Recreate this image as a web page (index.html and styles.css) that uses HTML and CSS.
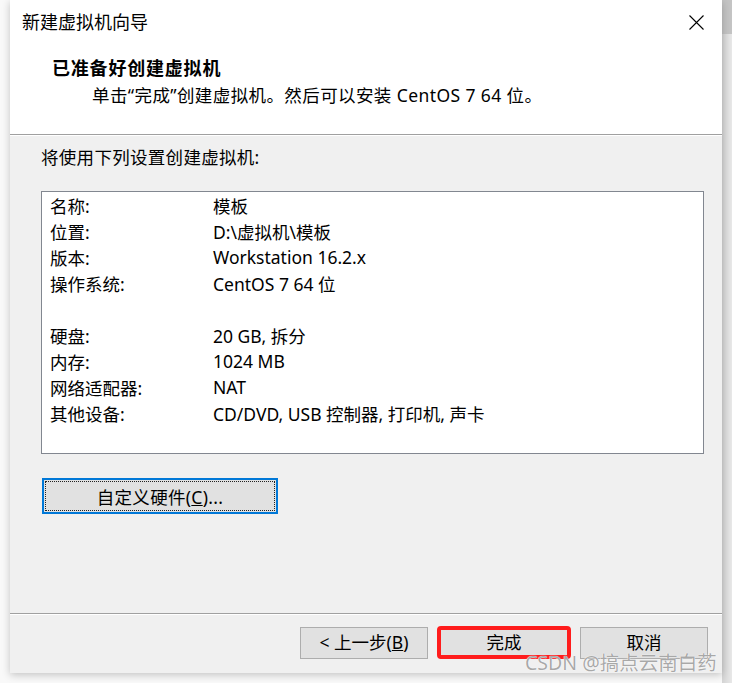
FILE: index.html
```html
<!DOCTYPE html>
<html lang="zh-CN">
<head>
<meta charset="utf-8">
<title>新建虚拟机向导</title>
<link rel="stylesheet" href="styles.css">
</head>
<body>
<div class="window">
  <div class="titlebar">
    <span class="title">新建虚拟机向导</span>
    <svg class="close" width="15" height="15" viewBox="0 0 15 15"><path d="M0.5 0.5 L14.5 14.5 M14.5 0.5 L0.5 14.5" stroke="#000" stroke-width="1.1" fill="none"/></svg>
  </div>
  <div class="header">
    <div class="h-title">已准备好创建虚拟机</div>
    <div class="h-sub">单击“完成”创建虚拟机。然后可以安装 CentOS 7 64 位。</div>
  </div>
  <div class="sep"></div>
  <div class="content">
    <div class="intro">将使用下列设置创建虚拟机:</div>
    <div class="summary">
      <span class="k">名称:</span><span class="v">模板</span>
      <span class="k">位置:</span><span class="v">D:\虚拟机\模板</span>
      <span class="k">版本:</span><span class="v">Workstation 16.2.x</span>
      <span class="k">操作系统:</span><span class="v">CentOS 7 64 位</span>
      <span class="blank"></span>
      <span class="k">硬盘:</span><span class="v">20 GB, 拆分</span>
      <span class="k">内存:</span><span class="v">1024 MB</span>
      <span class="k">网络适配器:</span><span class="v">NAT</span>
      <span class="k">其他设备:</span><span class="v">CD/DVD, USB 控制器, 打印机, 声卡</span>
    </div>
    <button class="custom">自定义硬件(<u>C</u>)...</button>
  </div>
  <div class="sep"></div>
  <div class="footer">
    <button class="btn">&lt; 上一步(<u>B</u>)</button>
    <button class="btn finish">完成</button>
    <button class="btn">取消</button>
  </div>
</div>
<div class="watermark">CSDN @搞点云南白药</div>
</body>
</html>
```
FILE: styles.css
```css
html {
  background:
    linear-gradient(#c4c4c4, #c4c4c4) right top / 10px 34px no-repeat,
    linear-gradient(to right, #d4d4d4, #e8e8e8) right top / 10px 100% no-repeat,
    #f9f9f9;
}
body {
  margin: 0;
  font-family: "Noto Sans", "Noto Sans CJK SC", sans-serif;
  font-size: 17.5px;
  color: #000;
  position: relative;
  height: 683px;
  overflow: hidden;
}
.window {
  margin-left: 10px;
  width: 712px;
  height: 673px;
  background: #f0f0f0;
  display: flex;
  flex-direction: column;
  box-shadow: 0 2px 8px rgba(0, 0, 0, 0.22);
}
.titlebar {
  height: 44px;
  background: #fff;
  display: flex;
  align-items: center;
  justify-content: space-between;
  padding: 0 18px 0 12px;
}
.title {
  font-size: 18px;
  line-height: 24px;
}
.close {
  display: block;
}
.header {
  background: #fff;
  height: 90px;
  padding: 11px 0 0 42px;
  box-sizing: border-box;
}
.h-title {
  font-family: "Noto Sans CJK SC", sans-serif;
  font-weight: bold;
  font-size: 18px;
  letter-spacing: 0.8px;
  line-height: 24px;
}
.h-sub {
  margin-top: 4px;
  padding-left: 40px;
  line-height: 24px;
  letter-spacing: 0.4px;
}
.sep {
  height: 1px;
  background: #a0a0a0;
  border-bottom: 1px solid #fff;
}
.content {
  flex: 1;
  display: flex;
  flex-direction: column;
  align-items: flex-start;
  padding: 9px 18px 0 31px;
}
.intro {
  line-height: 24px;
  letter-spacing: 0.3px;
}
.summary {
  margin-top: 22px;
  width: 663px;
  height: 263px;
  box-sizing: border-box;
  background: #fff;
  border: 1px solid #828790;
  padding: 0 0 0 8px;
  display: grid;
  grid-template-columns: 163px 1fr;
  grid-auto-rows: 26px;
  align-items: center;
  align-content: start;
}
.blank {
  grid-column: 1 / 3;
}
.custom {
  position: relative;
  margin: 24px 0 0 1px;
  width: 236px;
  height: 36px;
  background: #e1e1e1;
  border: 2px solid #0078d7;
  font: inherit;
  color: #000;
  padding: 0;
  letter-spacing: 0.3px;
}
.custom::before {
  content: "";
  position: absolute;
  inset: 1px;
  border: 1px dotted #222;
}
.footer {
  height: 58px;
  box-sizing: border-box;
  padding: 12px 14px 0 0;
  display: flex;
  justify-content: flex-end;
  align-items: flex-start;
  gap: 12px;
}
.btn {
  position: relative;
  width: 128px;
  height: 32px;
  background: #e1e1e1;
  border: 1px solid #adadad;
  font: inherit;
  line-height: 18px;
  color: #000;
  padding: 0 0 2px;
}
.finish::after {
  content: "";
  position: absolute;
  left: -4px;
  right: -4px;
  top: -2px;
  bottom: -1px;
  border: 4px solid #ff1c1c;
  border-radius: 4px;
}
.watermark {
  position: absolute;
  left: 525px;
  top: 653px;
  font-size: 19.5px;
  line-height: 19px;
  color: rgba(140, 140, 140, 0.75);
  text-shadow: 0 0 1px #fff, 0 0 1px #fff;
  white-space: nowrap;
}
```
